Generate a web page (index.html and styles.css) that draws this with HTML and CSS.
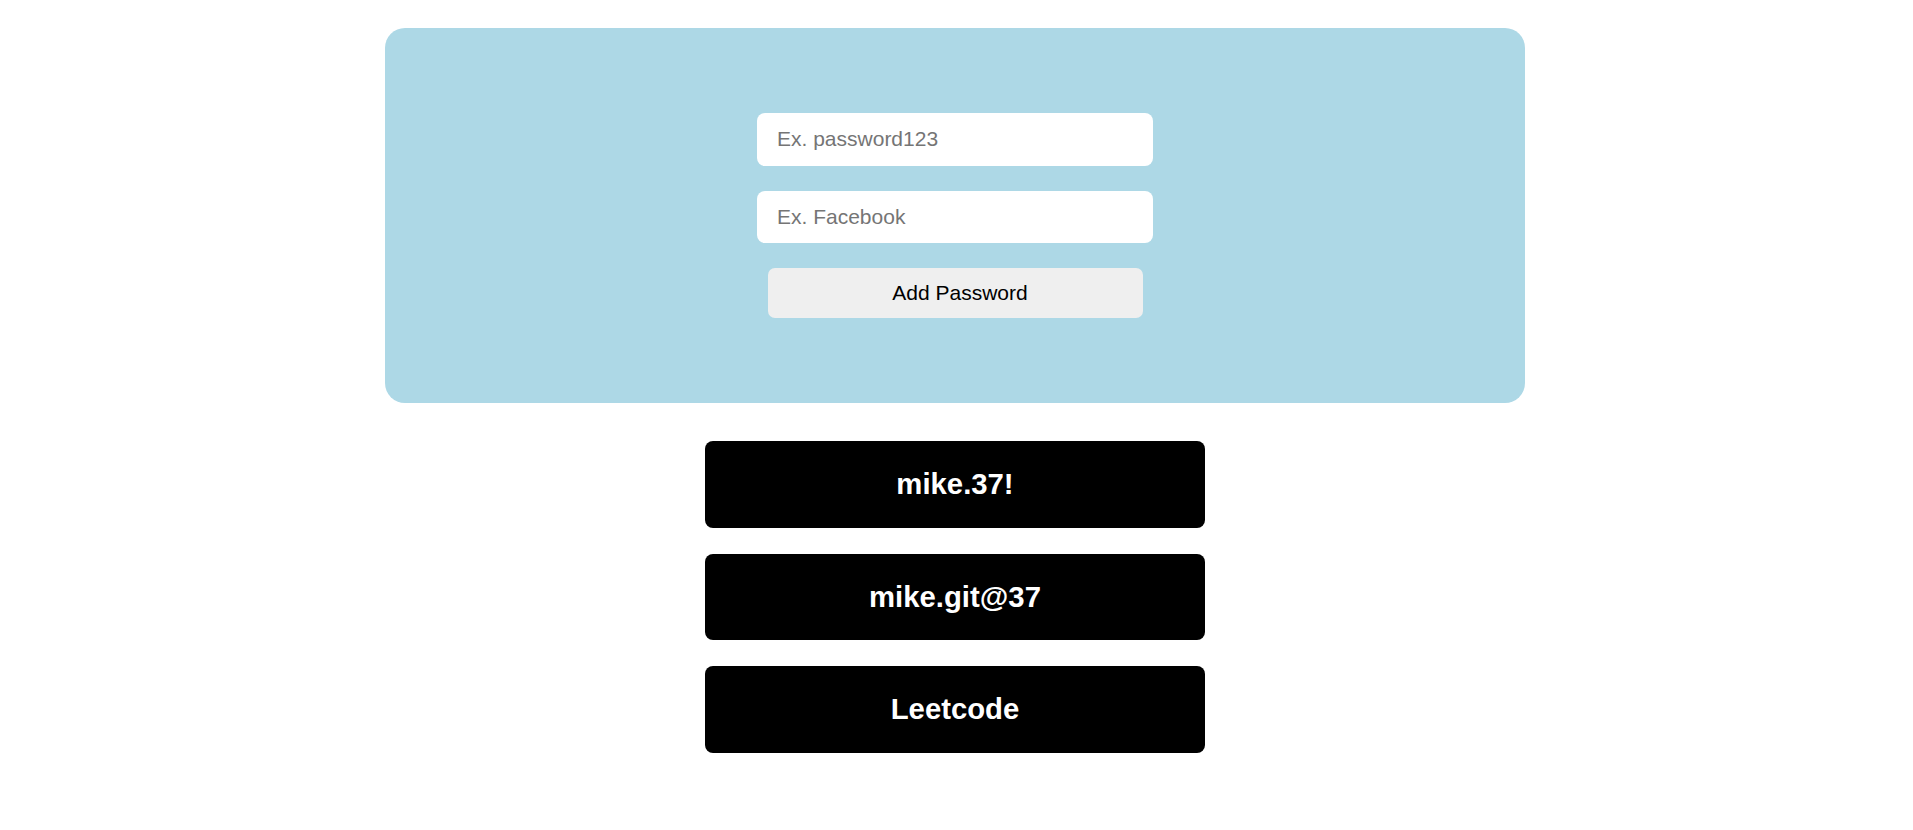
FILE: index.html
```html
<!DOCTYPE html>
<html lang="en">
<head>
<meta charset="utf-8">
<title>Password Manager</title>
<link rel="stylesheet" href="styles.css">
</head>
<body>
<div class="page">
  <form class="panel">
    <input class="field" type="text" placeholder="Ex. password123">
    <input class="field" type="text" placeholder="Ex. Facebook">
    <button class="add-btn" type="button">Add Password</button>
  </form>
  <ul class="list">
    <li class="card">mike.37!</li>
    <li class="card">mike.git@37</li>
    <li class="card">Leetcode</li>
  </ul>
</div>
</body>
</html>
```

FILE: styles.css
```css
* { box-sizing: border-box; }
html, body { margin: 0; padding: 0; background: #fff; }
body { font-family: "Liberation Sans", Arial, sans-serif; }

.page {
  display: flex;
  flex-direction: column;
  align-items: center;
  padding: 28px 3px 0 0;
}

.panel {
  width: 1140px;
  height: 375px;
  margin: 0;
  background: #add8e6;
  border-radius: 20px;
  display: flex;
  flex-direction: column;
  align-items: center;
  justify-content: center;
  gap: 25px;
}

.field {
  width: 396px;
  height: 52.5px;
  border: none;
  border-radius: 8px;
  background: #fff;
  padding: 0 20px;
  font-family: "Liberation Sans", Arial, sans-serif;
  font-size: 21px;
  color: #000;
  outline: none;
}
.field::placeholder { color: #757575; }

.add-btn {
  width: 375px;
  height: 50px;
  border: none;
  border-radius: 7px;
  background: #efefef;
  padding: 0 0 0 10px;
  font-family: "Liberation Sans", Arial, sans-serif;
  font-size: 21px;
  color: #000;
}

.list {
  list-style: none;
  margin: 38px 0 0 0;
  padding: 0;
  display: flex;
  flex-direction: column;
  gap: 26px;
}

.card {
  width: 500px;
  height: 86.5px;
  background: #000;
  color: #fff;
  border-radius: 8px;
  display: flex;
  align-items: center;
  justify-content: center;
  font-weight: bold;
  font-size: 29.3px;
}
```
